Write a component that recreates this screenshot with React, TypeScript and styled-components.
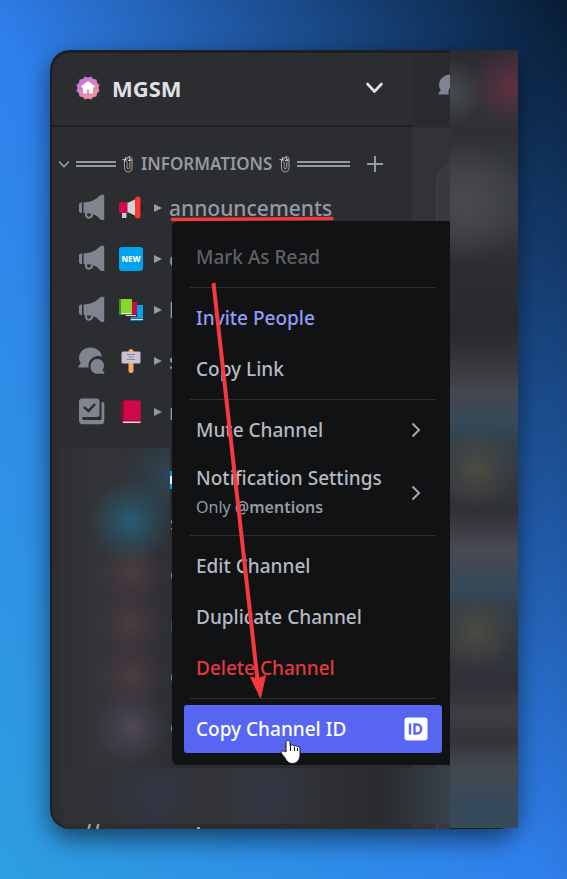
import React from "react";
import styled, { createGlobalStyle, css } from "styled-components";

const GlobalStyle = createGlobalStyle`
  *, *::before, *::after { box-sizing: border-box; }
  body {
    margin: 0;
    font-family: "Noto Sans", "Open Sans", sans-serif;
    color: #b5bac1;
  }
  ul { list-style: none; margin: 0; padding: 0; }
  svg { display: block; flex: none; }
`;

const Backdrop = styled.main`
  min-height: 100vh;
  padding: 50px 49px 50px 50px;
  background: linear-gradient(to top right, #2d9fdf 0%, #2f80ed 48%, #081c33 100%);
`;

const Window = styled.div`
  position: relative;
  display: grid;
  grid-template-columns: minmax(0, 1fr) 38px 68px;
  min-height: 779px;
  border-radius: 20px 0 20px 20px;
  background: #1e1f22;
  box-shadow: 0 10px 26px rgba(0, 0, 0, 0.55);
`;

const Sidebar = styled.nav`
  display: flex;
  flex-direction: column;
  margin: 3px 0 0 2px;
  overflow: hidden;
  background: #2b2d31;
  border-radius: 18px 0 0 20px;
`;

const BareButton = styled.button`
  padding: 0;
  border: 0;
  background: none;
  color: inherit;
  font: inherit;
  text-align: left;
  cursor: pointer;
`;

const ServerHeader = styled(BareButton)`
  display: flex;
  align-items: center;
  gap: 12px;
  height: 74px;
  padding: 0 26px 2px 24px;
  border-bottom: 2px solid #1f2023;
`;

const ServerName = styled.span`
  flex: 1;
  font-size: 22px;
  line-height: 28px;
  font-weight: 700;
  color: #dfe1e4;
`;

const Category = styled.div`
  display: flex;
  align-items: center;
  justify-content: space-between;
  height: 37px;
  margin-top: 18px;
  padding: 0 28px 0 6px;
  color: #949ba4;
`;

const CategoryToggle = styled(BareButton)`
  display: flex;
  align-items: center;
  gap: 6px;
  font-size: 17px;
  line-height: 24px;
  font-weight: 600;
  white-space: nowrap;
`;

const CategoryName = styled.span`
  padding: 0 1px;
`;

const Rule = styled.span<{ $long?: boolean }>`
  width: ${(p) => (p.$long ? 53 : 40)}px;
  height: 6px;
  border: solid #949ba4;
  border-width: 2px 0;
`;

const IconButton = styled(BareButton)`
  display: grid;
  place-items: center;
`;

const ChannelLink = styled.a`
  display: flex;
  align-items: center;
  height: 51px;
  padding-left: 26px;
  font-size: 21px;
  line-height: 28px;
  font-weight: 500;
  color: #949ba4;
  text-decoration: none;
  white-space: nowrap;
`;

const Emoji = styled.span`
  width: 24px;
  margin: 0 11px 0 14px;
`;

const ChannelName = styled.span`
  margin-left: 7px;
`;

const Obscured = styled.div`
  display: flex;
  flex: 1 0 auto;
  margin-top: 11px;
  padding-left: 6px;
`;

const Smudge = styled.div`
  width: 112px;
  height: 363px;
  background:
    radial-gradient(circle at 112px 28px, #2d4b5bcc 0, #2d4b5b66 24px, #2d4b5b00 48px),
    radial-gradient(circle at 73px 73px, #28596e 4px, #28596e88 20px, #28596e00 42px),
    radial-gradient(circle at 73px 125px, #4b3a41 2px, #4b3a4188 16px, #4b3a4100 34px),
    radial-gradient(circle at 73px 176px, #4b3a41 2px, #4b3a4188 16px, #4b3a4100 34px),
    radial-gradient(circle at 73px 228px, #4b3a41 2px, #4b3a4188 16px, #4b3a4100 34px),
    radial-gradient(circle at 73px 279px, #4c4655 3px, #4c465588 17px, #4c465500 38px),
    linear-gradient(to right, #2d2f33, #333539 35%, #313236 70%, #2e3034);
`;

const Slivers = styled.ul`
  width: 60px;
  margin-top: 14px;
  font-size: 20px;
  line-height: 28px;
  color: #949ba4;
`;

const Sliver = styled.li<{ $head?: boolean }>`
  display: flex;
  align-items: center;
  height: ${(p) => (p.$head ? 35 : 51)}px;
`;

const BlueTag = styled.span`
  width: 12px;
  height: 18px;
  border: solid #0a9eea;
  border-width: 5px 0;
  background: #dff3fd;
`;

const PeekRow = styled.div`
  display: flex;
  align-items: flex-end;
  gap: 97px;
  height: 5px;
  padding-left: 34px;
`;

const LowerSmudge = styled.div`
  position: absolute;
  left: 14px;
  right: 68px;
  bottom: 5px;
  height: 56px;
  background:
    radial-gradient(circle at 90px 26px, #333645 0, #33364500 52px),
    radial-gradient(circle at 206px 26px, #333645 0, #33364500 56px),
    linear-gradient(to right, #2f3135 0, #343639 50%, #2a2b2e 82%, #37414b 100%);
`;

const Pane = styled.section`
  margin-top: 3px;
  background: #313338;
  overflow: hidden;
`;

const PaneHeader = styled.div`
  height: 75px;
  padding: 21px 0 0 26px;
  background: #2a2b2f;
  border-bottom: 2px solid #2c2e32;
`;

const PaneCard = styled.div`
  height: 100%;
  margin: 34px -30px 0 24px;
  border: 1px solid #404247;
  border-radius: 20px;
  background: #393a3f;
`;

const BlurStrip = styled.aside`
  margin-bottom: 1px;
  background:
    radial-gradient(circle at 62px 36px, #5b2f40 4px, #5b2f4088 20px, #5b2f4000 42px),
    radial-gradient(circle at 0 42px, #464a50 0, #464a5000 34px),
    radial-gradient(circle at 15px 152px, #4a4b50 0, #4a4b5000 60px),
    radial-gradient(circle at 26px 418px, #4a4a40 2px, #4a4a4088 18px, #4a4a4000 40px),
    radial-gradient(circle at 26px 582px, #4a4a40 2px, #4a4a4088 18px, #4a4a4000 40px),
    linear-gradient(
      to bottom,
      #2a2b2e 0, #333439 44px, #2e3034 84px, #393c42 130px, #3a3c43 168px,
      #2c2d30 216px, #292a2d 280px, #303136 300px, #45464e 342px, #34495a 374px,
      #33404a 394px, #34363f 440px, #303137 460px, #484952 500px, #34495a 538px,
      #33404a 556px, #34363e 600px, #2f3037 632px, #3d3e43 665px, #33343a 690px,
      #464850 718px, #34495a 755px, #374a58 778px
    );
`;

const Menu = styled.div`
  position: absolute;
  left: 122px;
  right: 68px;
  top: 171px;
  display: flex;
  flex-direction: column;
  gap: 3px;
  padding: 12px 8px 12px 12px;
  border-radius: 6px 0 0 6px;
  background: #111214;
`;

type Tone = "plain" | "muted" | "brand" | "danger" | "active";

const tones = {
  plain: css`color: #b5bac1;`,
  muted: css`color: #5f6166;`,
  brand: css`color: #949cf7;`,
  danger: css`color: #e5393e;`,
  active: css`color: #fff; background: #5865f2;`,
};

const MenuItem = styled(BareButton)<{ $tone: Tone; $tall?: boolean; $submenu?: boolean }>`
  display: flex;
  align-items: center;
  justify-content: space-between;
  min-height: ${(p) => (p.$tall ? 72 : 48)}px;
  padding: 0 ${(p) => (p.$submenu ? 21 : 14)}px 0 12px;
  border-radius: 3px;
  font-size: 19px;
  line-height: 28px;
  font-weight: 500;
  white-space: nowrap;
  ${(p) => tones[p.$tone]}
`;

const Hint = styled.small`
  display: block;
  font-size: 16px;
  line-height: 30px;
  font-weight: 400;
  color: #949ba4;
  strong { font-weight: 600; }
`;

const Divider = styled.hr`
  width: auto;
  height: 1px;
  margin: 3px 6px;
  border: 0;
  background: #2e2f34;
`;

const Annotations = styled.svg`
  position: absolute;
  left: 0;
  top: 0;
  pointer-events: none;
`;

const Megaphone = () => (
  <svg width="27" height="27" viewBox="0 0 27 27" fill="#80848e">
    <path d="M4 8.500v10.500H3.200C1.500 19 1 18 1 16.500v-5.500c0-1.500.5-2.500 2.200-2.500z" />
    <path d="M5.500 8.500C11.500 8.500 16.500 6.500 20.500 2.800 22.300 1 23.300.8 25 .8h1.200V26H25c-1.700 0-2.700-.6-4-2-2-2-4.500-3.500-7.500-4.200L5.500 18.800z" />
    <path d="M8 18v2.600c0 4.400 5.800 4.200 6.200-.6" fill="none" stroke="#80848e" strokeWidth="2.200" />
  </svg>
);

const Chats = () => (
  <svg width="27" height="27" viewBox="0 0 27 27" fill="#80848e">
    <path d="M12.500.5C18 .5 23 4.200 24 9.500c-1-.3-2-.5-3.500-.5-6 0-10 4.500-10 9.500 0 .8.100 1.500.3 2H1.500c-1.200 0-1.500-.8-.8-1.800.8-.8 2-2 2-3C1.500 14 1 12.500 1 11.500 1 5 6 .5 12.500.5z" />
    <path d="M19.500 12c4 0 6.500 3 6.500 6.500 0 2-.6 3.300-1.400 4.400.2 1 1 1.600 1.600 2.100.6.800.3 1.800-.7 1.800h-6c-4 0-7-3.300-7-7.300s3-7.500 7-7.500z" />
  </svg>
);

const Rules = () => (
  <svg width="27" height="27" viewBox="0 0 27 27" fill="#80848e">
    <path fillRule="evenodd" d="M4 .5h14.500c2 0 3 1 3 3V16c0 2-1 3-3 3H5.500c-2 0-2 3 0 3H22c1 0 1.500-.5 1.500-1.500V4.200h1.300c1 0 1.500.5 1.500 1.500V23c0 2-1 3.200-3 3.200H4.500C2 26.200 1 24.500 1 22V4C1 2 2 .5 4 .5zM5 9.800l5.500 5 7.500-8-1.900-1.500-5.800 6-3.500-3z" />
  </svg>
);

const Horn = () => (
  <svg width="24" height="24" viewBox="0 0 24 24">
    <path d="M3 15h4.500v7H3z" fill="#c8cacf" />
    <rect x="0" y="6" width="9" height="11" rx="1" fill="#ce0b48" />
    <path d="M8.500 7L18 2.500v18L8.500 16z" fill="#d2d4d5" />
    <ellipse cx="21.500" cy="11.500" rx="2" ry="4" fill="#1e2024" />
    <rect x="16" y="0.500" width="5.500" height="22" rx="2.700" fill="#fb3831" />
  </svg>
);

const NewBadge = () => (
  <svg width="24" height="24" viewBox="0 0 24 24">
    <rect width="24" height="24" rx="3" fill="#00a3ee" />
    <text x="12" y="15" fontFamily="Noto Sans" fontSize="8" fontWeight="800" textAnchor="middle" fill="#fff">NEW</text>
  </svg>
);

const Books = () => (
  <svg width="24" height="24" viewBox="0 0 24 24">
    <path d="M12 7h12v14H12z" fill="#00a3ee" />
    <path d="M11 20h13v3H11z" fill="#0b79ac" />
    <path d="M12 21h12v1H12z" fill="#dbe9f0" />
    <path d="M7 4h11v13H7z" fill="#ce0b48" />
    <path d="M6 16h12v3H6z" fill="#870c34" />
    <path d="M7 17h10v1H7z" fill="#e0d4da" />
    <path d="M0 1h13v15H0z" fill="#86d72f" />
    <path d="M0 1h2v16H0zM0 16h13v1H0z" fill="#4d8a20" />
    <path d="M2 15h10v1H2z" fill="#e4efdc" />
  </svg>
);

const Sign = () => (
  <svg width="24" height="24" viewBox="0 0 24 24">
    <rect x="9.500" y="0" width="5" height="24" rx="2.500" fill="#f5ab5c" />
    <rect x="2.500" y="2.500" width="19" height="12" rx="1.500" fill="#cbc0d4" />
    <path d="M8 5.500h8M9.500 8h5M8 10.500h8" stroke="#8d8498" />
  </svg>
);

const Book = () => (
  <svg width="24" height="24" viewBox="0 0 24 24">
    <rect x="2.500" y="0.500" width="19" height="23" rx="1.500" fill="#920a38" />
    <path d="M5 .5h16.500v20H5z" fill="#ce0b48" />
    <path d="M4 21.500h17.500v1.500H4z" fill="#e3dfe4" />
  </svg>
);

const Paperclips = () => (
  <svg width="12" height="18" viewBox="0 0 12 18" fill="none" strokeLinecap="round">
    <path d="M2.500 6v6.500c0 6 7.500 6 7.500 0V4.500c0-4-5-4-5 0V12c0 2.600 2.800 2.600 2.800 0V7" stroke="#a5a6a8" />
    <path d="M1 4.500l3 .5M2.500 6l1.500-3.500M6.500 5.500l3-.5M7 2.500l1.500 3" stroke="#d9c5cb" strokeWidth="1.200" />
    <path d="M5.500 5.500L6.500 7M3.800 8v3" stroke="#16171a" />
  </svg>
);

const Arrowhead = () => (
  <svg width="8" height="8" viewBox="0 0 8 8" fill="#949ba4"><path d="M0 0l8 4-8 4z" /></svg>
);

const Chevron = () => (
  <svg width="10" height="16" viewBox="0 0 10 16" fill="none" stroke="#a3a8b0" strokeWidth="2"><path d="M1.500 1.500L8 8l-6.500 6.500" /></svg>
);

const badgePoints = Array.from({ length: 24 }, (_, i) => {
  const radius = i % 2 ? 12 : 10.4;
  const angle = (i * Math.PI) / 12;
  return `${12 + radius * Math.cos(angle)},${12 + radius * Math.sin(angle)}`;
}).join(" ");

const ServerBadge = () => (
  <svg width="24" height="24" viewBox="0 0 24 24">
    <defs>
      <linearGradient id="badge" x1="0" y1="0" x2="0.600" y2="1">
        <stop offset="0" stopColor="#b96cf2" />
        <stop offset="1" stopColor="#ee969b" />
      </linearGradient>
    </defs>
    <polygon points={badgePoints} fill="url(#badge)" />
    <path d="M12 5.500l6.500 5-1 1-1-.4v5.900h-3v-4h-3v4h-3v-5.900l-1 .4-1-1z" fill="#fff" stroke="#fff" strokeLinejoin="round" />
  </svg>
);

const IdIcon = () => (
  <svg width="24" height="24" viewBox="0 0 24 24">
    <rect x="0.500" y="0.500" width="23" height="23" rx="3" fill="#fff" />
    <path d="M6 6.500v11M10.500 7.500v9h2.300c5.800 0 5.800-9 0-9z" fill="none" stroke="#5865f2" strokeWidth="2.400" />
  </svg>
);

const channels = [
  { id: "announcements", label: "announcements", icon: <Megaphone />, emoji: <Horn /> },
  { id: "new", label: "c", icon: <Megaphone />, emoji: <NewBadge /> },
  { id: "library", label: "l", icon: <Megaphone />, emoji: <Books /> },
  { id: "forum", label: "s", icon: <Chats />, emoji: <Sign /> },
  { id: "rules", label: "r", icon: <Rules />, emoji: <Book /> },
];

export default function App() {
  return (
    <>
      <GlobalStyle />
      <Backdrop>
        <Window>
          <Sidebar aria-label="Channels">
            <ServerHeader type="button">
              <ServerBadge />
              <ServerName>MGSM</ServerName>
              <svg width="22" height="16" viewBox="0 0 22 16" fill="none" stroke="#dfe1e4" strokeWidth="2.600" strokeLinecap="round" strokeLinejoin="round">
                <path d="M3.500 4l7 7.500 7-7.500" />
              </svg>
            </ServerHeader>
            <Category>
              <CategoryToggle type="button" aria-expanded="true">
                <svg width="12" height="8" viewBox="0 0 12 8" fill="none" stroke="#949ba4" strokeWidth="1.600"><path d="M1 1.500l5 5 5-5" /></svg>
                <Rule />
                <Paperclips />
                <CategoryName>INFORMATIONS</CategoryName>
                <Paperclips />
                <Rule $long />
              </CategoryToggle>
              <IconButton type="button" aria-label="Create channel">
                <svg width="18" height="18" viewBox="0 0 18 18" stroke="#949ba4" strokeWidth="2"><path d="M9 1v16M1 9h16" /></svg>
              </IconButton>
            </Category>
            <ul>
              {channels.map((c) => (
                <li key={c.id}>
                  <ChannelLink href={`#${c.id}`}>
                    {c.icon}
                    <Emoji>{c.emoji}</Emoji>
                    <Arrowhead />
                    <ChannelName>{c.label}</ChannelName>
                  </ChannelLink>
                </li>
              ))}
            </ul>
            <Obscured>
              <Smudge />
              <Slivers>
                <Sliver $head><BlueTag /></Sliver>
                {["s", "e", "r", "c", "g"].map((letter) => (
                  <Sliver key={letter}>{letter}</Sliver>
                ))}
              </Slivers>
            </Obscured>
            <PeekRow>
              <svg width="14" height="5" viewBox="0 0 14 5" stroke="#949ba4" strokeWidth="2.500"><path d="M4 0L2.500 5M12.500 0L11 5" /></svg>
              <svg width="3" height="2" viewBox="0 0 3 2" fill="#949ba4"><path d="M0 0h3v2H0z" /></svg>
            </PeekRow>
          </Sidebar>
          <Pane>
            <PaneHeader><Chats /></PaneHeader>
            <PaneCard />
          </Pane>
          <LowerSmudge />
          <BlurStrip />
          <Menu role="menu" aria-label="Channel options">
            <MenuItem role="menuitem" $tone="muted" disabled>Mark As Read</MenuItem>
            <Divider />
            <MenuItem role="menuitem" $tone="brand">Invite People</MenuItem>
            <MenuItem role="menuitem" $tone="plain">Copy Link</MenuItem>
            <Divider />
            <MenuItem role="menuitem" $tone="plain" $submenu aria-haspopup="menu">Mute Channel<Chevron /></MenuItem>
            <MenuItem role="menuitem" $tone="plain" $submenu $tall aria-haspopup="menu">
              <span>
                Notification Settings
                <Hint>Only <strong>@mentions</strong></Hint>
              </span>
              <Chevron />
            </MenuItem>
            <Divider />
            <MenuItem role="menuitem" $tone="plain">Edit Channel</MenuItem>
            <MenuItem role="menuitem" $tone="plain">Duplicate Channel</MenuItem>
            <MenuItem role="menuitem" $tone="danger">Delete Channel</MenuItem>
            <Divider />
            <MenuItem role="menuitem" $tone="active">Copy Channel ID<IdIcon /></MenuItem>
          </Menu>
          <Annotations width="400" height="730" viewBox="0 0 400 730" aria-hidden="true">
            <path d="M122.500 169.500L282 168.500" stroke="#f5393d" strokeWidth="3.500" strokeLinecap="round" />
            <path d="M163.500 233L207.500 630" stroke="#f5393d" strokeWidth="4" />
            <path d="M210.500 648l-10-21 7 2 8-3.500z" fill="#f5393d" stroke="#f5393d" />
            <path d="M236 702v-9.500c0-3 4-3 4 0v3c1.500-1 3.300-.8 4 .5 1.500-.8 3-.3 3.500.8 1.500-.4 2.500.5 2.500 2v5.700c0 5.500-3 9-7.500 9-4 0-5.500-2-7.500-5.500l-3.500-4.500c-1-2 1.500-3.500 3.500-2z" fill="#fff" stroke="#15161a" />
            <path d="M240.500 696v5M244.500 697v4M247.500 698v3" stroke="#15161a" />
          </Annotations>
        </Window>
      </Backdrop>
    </>
  );
}
